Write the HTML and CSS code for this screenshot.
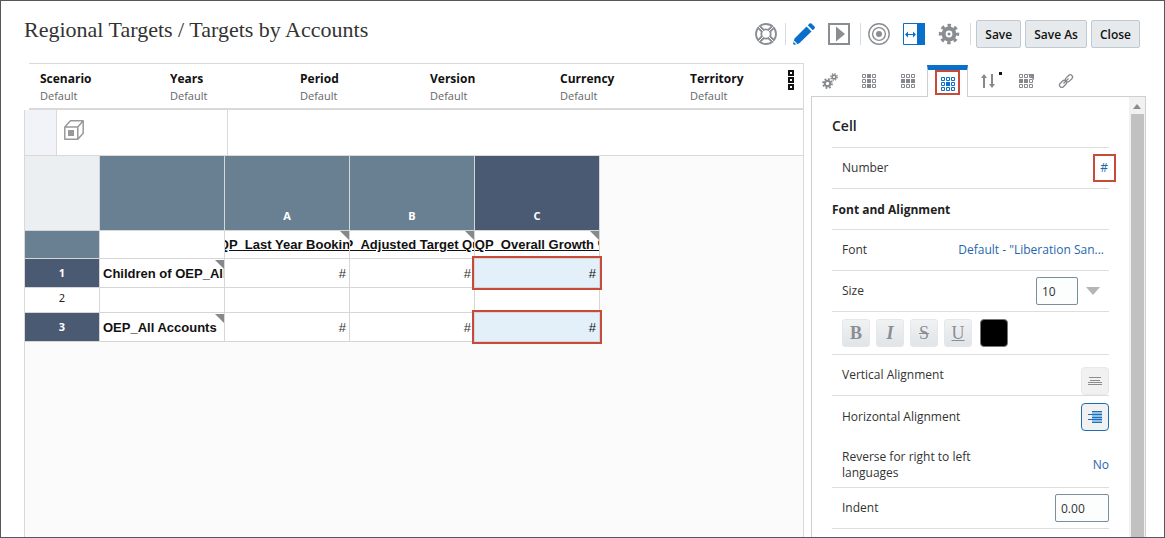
FILE: index.html
```html
<!DOCTYPE html>
<html lang="en">
<head>
    <meta charset="UTF-8">
    <meta name="viewport" content="width=device-width, initial-scale=1.0">
    <title>Regional Targets / Targets by Accounts</title>
    <link rel="stylesheet" href="styles.css">
</head>
<body>
    <!-- shared shapes for the 3x3 grid icons -->
    <svg width="0" height="0" class="defs" aria-hidden="true">
        <symbol id="grid9" viewBox="0 0 14 14">
            <path fill="none" stroke="currentColor" d="M.5.5h3v3h-3zM5.5.5h3v3h-3zM10.5.5h3v3h-3zM.5 5.5h3v3h-3zM5.5 5.5h3v3h-3zM10.5 5.5h3v3h-3zM.5 10.5h3v3h-3zM5.5 10.5h3v3h-3zM10.5 10.5h3v3h-3z"/>
        </symbol>
    </svg>

    <div class="app">
        <header class="header">
            <h1>Regional Targets / Targets by Accounts</h1>
            <div class="toolbar">
                <div class="group">
                    <button class="icon" aria-label="Help">
                        <svg width="22" height="22" viewBox="0 0 22 22" fill="none" stroke="currentColor">
                            <circle cx="11" cy="11" r="10" stroke-width="1.8"/>
                            <circle cx="11" cy="11" r="4.7" stroke-width="1.8"/>
                            <path d="M4.500 4.500L7.500 7.500M17.500 4.500L14.500 7.500M4.500 17.500L7.500 14.500M17.500 17.500L14.500 14.500" stroke-width="4.500"/>
                            <path d="M3.500 3.500L8 8M18.500 3.500L14 8M3.500 18.500L8 14M18.500 18.500L14 14" stroke="#fff" stroke-width="1"/>
                        </svg>
                    </button>
                </div>
                <div class="group">
                    <button class="icon blue" aria-label="Edit">
                        <svg width="22" height="22" viewBox="0 0 22 22" fill="currentColor">
                            <path d="M13.500 3.500l5 5L6 20.500l-4.800 1.200L0 21l1.500-5.500zM14.800 2.300L16.500.6q1-.9 2 0l3 3q.9 1 0 2l-1.700 1.700z"/>
                            <path d="M.8 18.300l2.800 2.500" stroke="#fff" stroke-width="1.200"/>
                        </svg>
                    </button>
                    <button class="icon" aria-label="Preview">
                        <svg width="22" height="22" viewBox="0 0 22 22" fill="currentColor">
                            <path d="M1 1h20v20H1z" fill="none" stroke="currentColor" stroke-width="2"/>
                            <path d="M8 3.500L17 11l-9 7.500z"/>
                        </svg>
                    </button>
                </div>
                <div class="group">
                    <button class="icon" aria-label="Target">
                        <svg width="22" height="22" viewBox="0 0 22 22" fill="none" stroke="currentColor" stroke-width="1.400">
                            <circle cx="11" cy="11" r="10.200"/>
                            <circle cx="11" cy="11" r="6.400"/>
                            <circle cx="11" cy="11" r="3" fill="currentColor" stroke="none"/>
                        </svg>
                    </button>
                    <button class="icon blue" aria-label="Toggle panel">
                        <svg width="22" height="22" viewBox="0 0 22 22" fill="currentColor">
                            <path d="M.5.5h21v21H.5z" fill="none" stroke="currentColor"/>
                            <path d="M14 0h8v22h-8zM2 11.500l3-3V11h5V8.500l3 3-3 3V12H5v2.500z"/>
                        </svg>
                    </button>
                    <button class="icon" aria-label="Settings">
                        <svg width="22" height="22" viewBox="0 0 22 22" fill="none" stroke="currentColor">
                            <circle cx="11" cy="11" r="5.400" stroke-width="4"/>
                            <circle cx="11" cy="11" r="8.500" stroke-width="3.400" stroke-dasharray="3.400 3.276" stroke-dashoffset="1.700"/>
                            <circle cx="11" cy="11" r="1.500" fill="currentColor" stroke="none"/>
                        </svg>
                    </button>
                </div>
                <div class="group actions">
                    <button class="btn">Save</button>
                    <button class="btn">Save As</button>
                    <button class="btn">Close</button>
                </div>
            </div>
        </header>

        <div class="body">
            <main class="report">
                <div class="pov">
                    <div class="dim"><b>Scenario</b><span>Default</span></div>
                    <div class="dim"><b>Years</b><span>Default</span></div>
                    <div class="dim"><b>Period</b><span>Default</span></div>
                    <div class="dim"><b>Version</b><span>Default</span></div>
                    <div class="dim"><b>Currency</b><span>Default</span></div>
                    <div class="dim"><b>Territory</b><span>Default</span></div>
                    <button class="more" aria-label="More">
                        <svg width="6" height="20" viewBox="0 0 6 20" fill="none" stroke="#111" stroke-width="2">
                            <path d="M1 1h4v4H1zM1 8h4v4H1zM1 15h4v4H1z"/>
                        </svg>
                    </button>
                </div>

                <div class="grid">
                    <div class="pages">
                        <div class="corner"></div>
                        <div class="cube">
                            <svg width="20" height="20" viewBox="0 0 20 20" fill="none" stroke="#999" stroke-width="1.500" stroke-linejoin="round">
                                <path d="M.8 7h13v12.200H.8zM.8 7L6.500.8h12.700L13.800 7M19.200.8v12.500l-5.400 5.900"/>
                                <path d="M4 10h6v6H4z" fill="#999" stroke="none"/>
                            </svg>
                        </div>
                    </div>
                    <table>
                        <thead>
                            <tr class="letters">
                                <td class="origin"></td>
                                <th class="steel"></th>
                                <th class="steel">A</th>
                                <th class="steel">B</th>
                                <th class="navy">C</th>
                            </tr>
                        </thead>
                        <tbody>
                            <tr class="members">
                                <th class="steel"></th>
                                <td></td>
                                <td><div class="member col">OQP_Last Year Bookings</div></td>
                                <td><div class="member col">OQP_Adjusted Target Quota</div></td>
                                <td><div class="member col">OQP_Overall Growth %</div></td>
                            </tr>
                            <tr class="data">
                                <th class="navy">1</th>
                                <td><div class="member">Children of OEP_All Accounts</div></td>
                                <td class="num">#</td>
                                <td class="num">#</td>
                                <td class="num picked">#</td>
                            </tr>
                            <tr class="blank">
                                <th>2</th>
                                <td></td>
                                <td></td>
                                <td></td>
                                <td></td>
                            </tr>
                            <tr class="data">
                                <th class="navy">3</th>
                                <td><div class="member">OEP_All Accounts</div></td>
                                <td class="num">#</td>
                                <td class="num">#</td>
                                <td class="num picked">#</td>
                            </tr>
                        </tbody>
                    </table>
                </div>
            </main>

            <aside class="side">
                <nav class="tabs">
                    <button class="tab" aria-label="General">
                        <svg width="16" height="16" viewBox="0 0 16 16" fill="none" stroke="currentColor">
                            <circle cx="5.500" cy="10.500" r="2.700" stroke-width="2"/>
                            <circle cx="5.500" cy="10.500" r="4.500" stroke-width="1.800" stroke-dasharray="1.800 1.734"/>
                            <circle cx="12" cy="4" r="1.900" stroke-width="1.600"/>
                            <circle cx="12" cy="4" r="3.300" stroke-width="1.300" stroke-dasharray="1.300 1.292"/>
                        </svg>
                    </button>
                    <button class="tab" aria-label="Column">
                        <svg width="14" height="14" fill="currentColor"><use href="#grid9"/><path d="M5 0h4v4H5zM5 5h4v4H5zM5 10h4v4H5z"/></svg>
                    </button>
                    <button class="tab" aria-label="Row">
                        <svg width="14" height="14" fill="currentColor"><use href="#grid9"/><path d="M0 5h4v4H0zM5 5h4v4H5zM10 5h4v4h-4z"/></svg>
                    </button>
                    <button class="tab active" aria-label="Cell">
                        <svg width="14" height="14" fill="currentColor"><use href="#grid9"/><path d="M5 5h4v4H5z"/></svg>
                    </button>
                    <button class="tab" aria-label="Sort">
                        <svg width="28" height="20" viewBox="0 0 28 20">
                            <path d="M10 17V5M18 3v12" fill="none" stroke="currentColor" stroke-width="2"/>
                            <path d="M7 7l3-4 3 4zM15 13l3 4 3-4z" fill="currentColor"/>
                            <path d="M25 1h3v3h-3z" fill="#111"/>
                        </svg>
                    </button>
                    <button class="tab" aria-label="Conditional format">
                        <svg width="15" height="14" viewBox="0 0 15 14" fill="currentColor"><use href="#grid9" width="14" height="14"/><path d="M0 5h4v4H0zM5 5h4v4H5zM9 0h6v6z"/></svg>
                    </button>
                    <button class="tab" aria-label="Links">
                        <svg width="16" height="16" viewBox="0 0 16 16" fill="none" stroke="currentColor" stroke-width="1.300">
                            <rect x="7" y="3" width="8" height="4.600" rx="2.300" transform="rotate(-45 11 5.300)"/>
                            <rect x="1" y="8.600" width="8" height="4.600" rx="2.300" transform="rotate(-45 5 10.900)"/>
                            <path d="M5.500 10.500l5-5"/>
                        </svg>
                    </button>
                </nav>

                <div class="panel">
                    <form class="props">
                        <h2>Cell</h2>
                        <div class="row">
                            <span>Number</span>
                            <a href="#" class="marked">#</a>
                        </div>
                        <h3>Font and Alignment</h3>
                        <div class="row">
                            <span>Font</span>
                            <a href="#" class="font-link">Default - "Liberation San...</a>
                        </div>
                        <div class="row">
                            <label for="size">Size</label>
                            <span class="combo">
                                <input id="size" class="size" type="text" value="10">
                                <button type="button" class="drop" aria-label="Sizes"><svg width="14" height="8" viewBox="0 0 14 8"><path d="M0 0h14L7 8z" fill="#b3b5b8"/></svg></button>
                            </span>
                        </div>
                        <div class="row styles">
                            <button type="button" class="fmt">B</button>
                            <button type="button" class="fmt"><i>I</i></button>
                            <button type="button" class="fmt light"><s>S</s></button>
                            <button type="button" class="fmt light"><u>U</u></button>
                            <button type="button" class="swatch" aria-label="Font color"></button>
                        </div>
                        <div class="row">
                            <span>Vertical Alignment</span>
                            <button type="button" class="align low" aria-label="Vertical alignment">
                                <svg width="14" height="8" viewBox="0 0 14 8"><path d="M1 .5h12M2 3.500h10M0 5.500h14M0 7.500h14" stroke="#8a8d90"/></svg>
                            </button>
                        </div>
                        <div class="row open">
                            <span>Horizontal Alignment</span>
                            <button type="button" class="align on" aria-label="Horizontal alignment">
                                <svg width="14" height="12" viewBox="0 0 14 12"><path d="M4 0h10v12H4z" fill="#8fc0e8"/><path d="M4 .5h10M0 3.500h14M4 6.500h10M0 8.500h14M4 11.500h10" stroke="#1d6fb5"/></svg>
                            </button>
                        </div>
                        <div class="row tall">
                            <span>Reverse for right to left languages</span>
                            <a href="#">No</a>
                        </div>
                        <div class="row">
                            <label for="indent">Indent</label>
                            <input id="indent" class="indent" type="text" value="0.00">
                        </div>
                    </form>
                    <div class="scrollbar">
                        <svg width="8" height="5" viewBox="0 0 8 5"><path d="M0 5h8L4 0z" fill="#8a8a8a"/></svg>
                        <div class="thumb"></div>
                    </div>
                </div>
            </aside>
        </div>
    </div>
</body>
</html>
```
FILE: styles.css
```css
* {
    box-sizing: border-box;
}

body {
    margin: 0;
    font-family: "Open Sans", "Noto Sans", sans-serif;
    font-size: 12px;
    color: #333;
    background: #fff;
}

button, input {
    font-family: inherit;
    font-size: inherit;
    color: inherit;
    padding: 0;
}

button {
    border: 0;
    background: none;
    cursor: pointer;
}

svg {
    display: block;
}

a {
    color: #1f66ad;
    text-decoration: none;
}

.defs {
    position: absolute;
}

.app {
    display: flex;
    flex-direction: column;
    min-height: 100vh;
    border: 1px solid #58585a;
}

/* header */
.header {
    display: flex;
    justify-content: space-between;
    align-items: flex-start;
    padding: 16px 24px 0 23px;
    height: 62px;
}

h1 {
    margin: 0;
    font-family: Georgia, "Liberation Serif", serif;
    font-size: 22px;
    line-height: 26px;
    font-weight: normal;
    color: #333;
}

.toolbar {
    display: flex;
    align-items: center;
    padding-top: 6px;
}

.group {
    display: flex;
    align-items: center;
    gap: 13px;
    height: 22px;
    padding: 0 10px 0 7px;
    border-left: 1px solid #d5dbe0;
}

.group:first-child {
    border: 0;
    padding-right: 8px;
}

.actions {
    gap: 4px;
    padding: 0 0 0 5px;
}

.icon {
    color: #8a8d92;
}

.blue {
    color: #0a6fc8;
}

.btn {
    height: 28px;
    padding: 0 8px;
    border: 1px solid #bfc9d1;
    border-radius: 2px;
    background: #e6eaed;
    font-weight: 600;
    color: #111;
}

.body {
    display: flex;
    flex: 1;
    gap: 6px;
    padding: 0 18px 0 23px;
}

/* report area */
.report {
    display: flex;
    flex-direction: column;
    flex: 1;
    min-width: 0;
}

.pov {
    display: flex;
    align-items: flex-start;
    height: 47px;
    margin-left: 5px;
    padding: 6px 9px 0 11px;
    border-top: 1px solid #d9d9d9;
    border-right: 1px solid #d9d9d9;
    border-bottom: 2px solid #d9d9d9;
}

.dim {
    flex: none;
    width: 130px;
    line-height: 17px;
}

.dim:nth-last-child(2) {
    width: auto;
}

.dim b, .dim span {
    display: block;
}

.dim b {
    color: #111;
}

.dim span {
    font-size: 11px;
    color: #666;
}

.more {
    margin-left: auto;
}

.grid {
    flex: 1;
    background: #fbfbfb;
    border-left: 1px solid #d9d9d9;
    border-right: 1px solid #d9d9d9;
}

.pages {
    display: flex;
    height: 46px;
    background: #fff;
    border-bottom: 1px solid #d9d9d9;
}

.corner {
    width: 32px;
    background: #f1f3f8;
    border-right: 1px solid #d9d9d9;
}

.cube {
    width: 171px;
    padding: 10px 7px;
    border-right: 1px solid #d9d9d9;
}

table {
    width: 575px;
    table-layout: fixed;
    border-collapse: separate;
    border-spacing: 0;
}

th, td {
    position: relative;
    width: 125px;
    padding: 0;
    background: #fff;
    border-right: 1px solid #d6d6d6;
    border-bottom: 1px solid #d6d6d6;
}

tr > :first-child {
    width: 75px;
}

th {
    font-family: "Noto Sans", sans-serif;
    font-size: 11px;
    line-height: 16px;
    font-weight: bold;
    color: #222;
}

.blank th {
    font-weight: normal;
    vertical-align: top;
    padding-top: 2px;
}

.letters th {
    vertical-align: bottom;
    padding-bottom: 6px;
}

.letters > * {
    height: 75px;
}

.members > * {
    height: 28px;
}

.data > * {
    height: 29px;
}

.blank > * {
    height: 25px;
}

.letters .origin {
    background: #ebeff2;
}

th.steel {
    background: #688092;
    color: #fff;
}

th.navy {
    background: #4b5a73;
    color: #fff;
}

.member {
    position: relative;
    display: flex;
    overflow: hidden;
    padding-left: 3px;
    font-family: "Liberation Sans", Arial, sans-serif;
    font-size: 13px;
    line-height: 27px;
    font-weight: bold;
    color: #111;
    white-space: nowrap;
}

.member.col {
    justify-content: center;
    padding-left: 0;
    text-decoration: underline;
}

/* folded corner on member cells */
.member::after {
    content: "";
    position: absolute;
    top: 0;
    right: 0;
    border-top: 9px solid #85898c;
    border-left: 9px solid transparent;
}

.num {
    padding-right: 3px;
    font-family: "Liberation Sans", Arial, sans-serif;
    font-size: 13px;
    text-align: right;
}

.num.picked {
    z-index: 1;
    background: #e3f0fa;
    color: #111;
}

.picked::after, .marked::after, .active::after {
    content: "";
    position: absolute;
    border: 2px solid #c74b38;
}

.picked::after {
    inset: -3px;
}

/* side panel */
.side {
    display: flex;
    flex-direction: column;
    width: 336px;
}

.tabs {
    display: flex;
    align-items: flex-end;
    height: 33px;
}

.tab {
    display: flex;
    align-items: center;
    justify-content: center;
    width: 39px;
    height: 31px;
    color: #85898d;
}

.active {
    position: relative;
    z-index: 1;
    width: 41px;
    height: 32px;
    margin-bottom: -1px;
    border: 1px solid #cfcfcf;
    border-top: 5px solid #0a6fc8;
    border-bottom: 0;
    background: #fff;
    color: #0a6fc8;
}

.active::after {
    inset: 0 7px 2px 7px;
}

.panel {
    display: flex;
    flex: 1;
    margin-left: 1px;
    border: 1px solid #cfcfcf;
    border-bottom: 0;
}

.props {
    flex: 1;
    padding: 0 20px;
}

h2, h3 {
    display: flex;
    align-items: center;
    margin: 0;
    border-bottom: 1px solid #ddd;
    color: #222;
}

h2 {
    height: 51px;
    padding-top: 6px;
    font-size: 14px;
    font-weight: 600;
}

h3 {
    height: 41px;
    font-size: 12px;
}

.row {
    display: flex;
    align-items: center;
    justify-content: space-between;
    height: 41px;
    padding-left: 10px;
    line-height: 16px;
    border-bottom: 1px solid #ddd;
}

.open {
    border-bottom: 0;
}

.tall {
    height: 51px;
    padding-top: 6px;
}

.tall span {
    width: 140px;
}

.marked {
    position: relative;
    padding-right: 1px;
}

.marked::after {
    inset: -6px -7px -6px -7px;
}

.font-link {
    padding-right: 5px;
}

.combo {
    display: flex;
    align-items: center;
    gap: 8px;
    padding-right: 9px;
}

input {
    height: 28px;
    padding: 0 5px;
    border: 1px solid #78909c;
    border-radius: 2px;
    background: #fcfdfd;
}

.size {
    width: 42px;
}

.indent {
    width: 54px;
}

.styles {
    justify-content: flex-start;
    gap: 6px;
    height: 43px;
}

.fmt {
    width: 28px;
    height: 28px;
    border: 1px solid #e4e8ea;
    border-radius: 3px;
    background: linear-gradient(#f0f2f3, #e1e5e8);
    font-family: "Liberation Serif", serif;
    font-size: 18px;
    font-weight: bold;
    color: #8a8d92;
}

.light {
    font-weight: normal;
}

.swatch {
    width: 28px;
    height: 28px;
    margin-left: 2px;
    border: 1px solid #777;
    border-radius: 4px;
    background: #000;
}

.align {
    display: flex;
    align-items: center;
    justify-content: center;
    width: 28px;
    height: 28px;
    border: 1px solid #e8e8e8;
    border-radius: 4px;
    background: #f1f1f1;
}

.low {
    align-self: flex-end;
}

.on {
    border-color: #1d6fb5;
}

/* scrollbar */
.scrollbar {
    display: flex;
    flex-direction: column;
    align-items: center;
    width: 16px;
    padding-top: 7px;
    background: #f1f1f1;
}

.thumb {
    flex: 1;
    width: 13px;
    margin-top: 5px;
    background: #c1c1c1;
}
```
